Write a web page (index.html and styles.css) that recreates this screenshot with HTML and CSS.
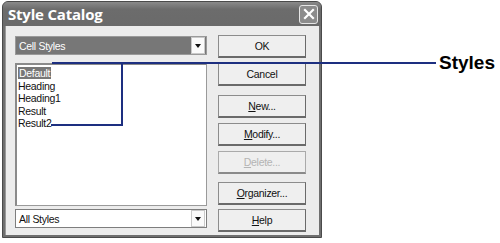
FILE: index.html
```html
<!DOCTYPE html>
<html lang="en">
<head>
    <meta charset="UTF-8">
    <title>Style Catalog</title>
    <link rel="stylesheet" href="styles.css">
</head>
<body>

<div class="page">
    <div class="dialog">
        <div class="titlebar">
            <span class="title">Style Catalog</span>
            <span class="close">
                <svg width="14" height="14" viewBox="0 0 14 14">
                    <path d="M3 3 L11 11 M11 3 L3 11" stroke="#fff" stroke-width="2.2" stroke-linecap="square"/>
                </svg>
            </span>
        </div>
        <div class="body">
            <div class="left">
                <div class="combo selected">
                    <span class="combo-text">Cell Styles</span>
                    <span class="arrow"></span>
                </div>
                <div class="list">
                    <div class="item"><span class="hl">Default</span></div>
                    <div class="item">Heading</div>
                    <div class="item">Heading1</div>
                    <div class="item">Result</div>
                    <div class="item">Result2</div>
                </div>
                <div class="combo">
                    <span class="combo-text">All Styles</span>
                    <span class="arrow"></span>
                </div>
            </div>
            <div class="right">
                <button class="btn ok">OK</button>
                <button class="btn cancel">Cancel</button>
                <button class="btn new"><u>N</u>ew...</button>
                <button class="btn modify"><u>M</u>odify...</button>
                <button class="btn delete" disabled><u>D</u>elete...</button>
                <button class="btn organizer"><u>O</u>rganizer...</button>
                <button class="btn help"><u>H</u>elp</button>
            </div>
        </div>
    </div>
    <div class="callout">Styles</div>
</div>

<!-- callout leader line, drawn over the dialog -->
<svg class="leader" width="500" height="243" viewBox="0 0 500 243">
    <path d="M52 63 H436 M122 63 V125 H51" fill="none" stroke="#1d2f80" stroke-width="2"/>
</svg>

</body>
</html>
```

FILE: styles.css
```css
body {
    margin: 0;
    background: #fff;
    font-family: "Liberation Sans", Arial, sans-serif;
}
.page {
    display: flex;
    align-items: flex-start;
    padding: 1px 0 0 2px;
}
.dialog {
    width: 318px;
    height: 235px;
    border: 1px solid #4a4a4a;
    border-radius: 6px 6px 0 0;
    background: #6f6f6f;
    display: flex;
    flex-direction: column;
}
.titlebar {
    height: 24px;
    display: flex;
    align-items: center;
    justify-content: space-between;
    padding: 0 3px 0 5px;
    background: linear-gradient(#8a8a8a, #6c6c6c 30%, #6a6a6a);
    border-radius: 5px 5px 0 0;
}
.title {
    color: #fff;
    font-family: "Open Sans", sans-serif;
    font-weight: 700;
    font-size: 15px;
    letter-spacing: -0.2px;
}
.close {
    width: 17px;
    height: 17px;
    border: 1px solid #e6e6e6;
    border-radius: 3px;
    background: #8c8c8c;
    display: flex;
    align-items: center;
    justify-content: center;
}
.body {
    flex: 1;
    margin: 0 2px 2px 2px;
    background: #ececec;
    border-left: 1px solid #9a9a9a;
    display: flex;
    padding: 9px 0 0 9px;
    gap: 11px;
}
.left {
    width: 192px;
    display: flex;
    flex-direction: column;
}
.combo {
    height: 17px;
    border: 1px solid #7e7e7e;
    background: #fff;
    display: flex;
    align-items: center;
    justify-content: space-between;
    font-size: 10.5px;
    letter-spacing: -0.3px;
    color: #111;
}
.combo.selected {
    margin-top: 1px;
    background: #777;
    color: #fff;
    border-color: #9a9a9a;
}
.combo-text {
    padding-left: 3px;
}
.arrow {
    width: 12px;
    height: 15px;
    margin-right: 1px;
    background: #fafafa;
    border: 1px solid #c9c9c9;
    display: flex;
    align-items: center;
    justify-content: center;
}
.arrow::after {
    content: "";
    border-left: 3.5px solid transparent;
    border-right: 3.5px solid transparent;
    border-top: 4px solid #111;
}
.list {
    margin-top: 8px;
    height: 138px;
    background: #fff;
    border: 1px solid #9a9a9a;
    border-left: 2px solid #8a8a8a;
    border-top: 2px solid #8a8a8a;
    padding: 2px 0 0 1px;
    margin-bottom: 3px;
    font-size: 10.5px;
    letter-spacing: -0.3px;
    color: #111;
}
.item {
    height: 12.5px;
    line-height: 12.5px;
}
.hl {
    background: #777;
    color: #fff;
    padding: 0 1px;
}
.right {
    width: 88px;
    display: flex;
    flex-direction: column;
}
.btn {
    height: 23px;
    border: 1px solid #8c8c8c;
    border-right-color: #6a6a6a;
    border-bottom: 2px solid #6a6a6a;
    background: #efefef;
    font-family: "Liberation Sans", Arial, sans-serif;
    font-size: 10.5px;
    letter-spacing: -0.3px;
    color: #111;
    padding: 0;
}
.btn u {
    text-decoration-thickness: 1px;
}
.ok { margin-top: 0; }
.cancel { margin-top: 5px; }
.new { margin-top: 9px; }
.modify { margin-top: 5px; }
.delete { margin-top: 5px; color: #b4b4b4; border-color: #aaa; border-bottom-color: #8a8a8a; }
.organizer { margin-top: 8px; }
.help { margin-top: 4px; }
.callout {
    margin: 51px 0 0 117px;
    font-size: 19px;
    font-weight: 700;
    color: #000;
}
.leader {
    position: absolute;
    left: 0;
    top: 0;
    pointer-events: none;
}
```
